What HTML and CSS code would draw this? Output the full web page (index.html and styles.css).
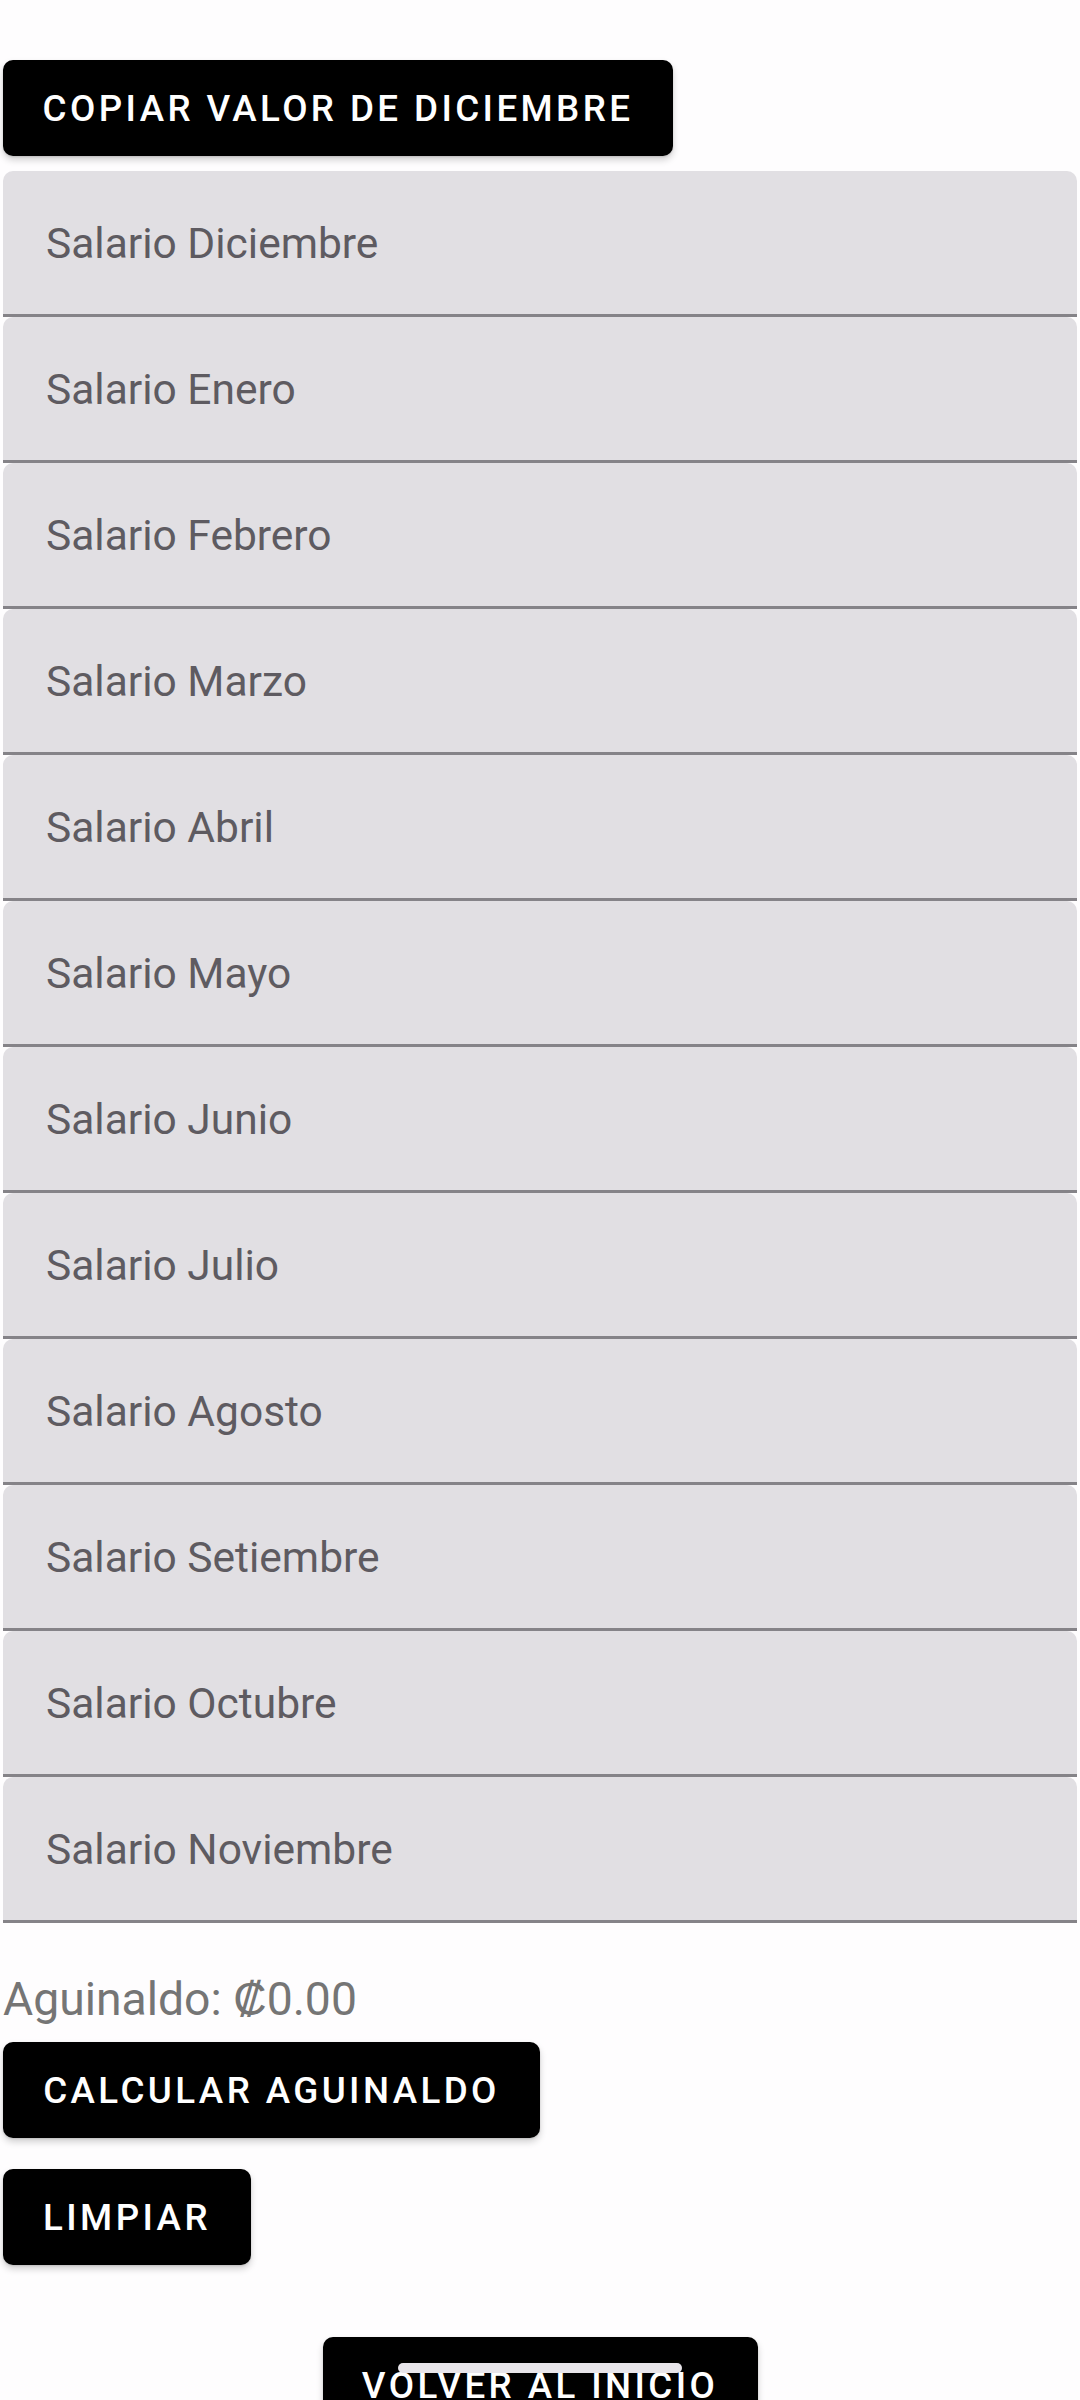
FILE: index.html
```html
<!DOCTYPE html>
<html lang="es">
<head>
    <meta charset="UTF-8">
    <meta name="viewport" content="width=device-width, initial-scale=1.0">
    <title>Aguinaldo</title>
    <link rel="stylesheet" href="styles.css">
</head>
<body>
  <div class="screen">
    <button class="btn btn-copy">COPIAR VALOR DE DICIEMBRE</button>

    <div class="fields">
        <div class="field">Salario Diciembre</div>
        <div class="field">Salario Enero</div>
        <div class="field">Salario Febrero</div>
        <div class="field">Salario Marzo</div>
        <div class="field">Salario Abril</div>
        <div class="field">Salario Mayo</div>
        <div class="field">Salario Junio</div>
        <div class="field">Salario Julio</div>
        <div class="field">Salario Agosto</div>
        <div class="field">Salario Setiembre</div>
        <div class="field">Salario Octubre</div>
        <div class="field">Salario Noviembre</div>
    </div>

    <p class="result">Aguinaldo: ₡0.00</p>

    <button class="btn btn-calc">CALCULAR AGUINALDO</button>
    <button class="btn btn-clear">LIMPIAR</button>

    <div class="bottom">
        <button class="btn btn-home">VOLVER AL INICIO</button>
    </div>
  </div>

  <!-- system gesture handle -->
  <div class="gesture-bar"></div>
</body>
</html>
```

FILE: styles.css
```css
:root {
    --background-color: #fefdfe;
    --field-bg: #e1dfe3;
    --field-line: #858388;
    --label-color: #5e5b61;
    --result-color: #757575;
}

html, body {
    margin: 0;
    height: 2400px;
    overflow: hidden;
}

body {
    background-color: var(--background-color);
    font-family: Roboto, "Liberation Sans", sans-serif;
    position: relative;
}

.screen {
    display: flex;
    flex-direction: column;
    align-items: flex-start;
    padding: 60px 3px 0 3px;
}

.btn {
    display: flex;
    align-items: center;
    justify-content: center;
    height: 96px;
    padding: 0;
    border: none;
    border-radius: 10px;
    background: #000;
    color: #fff;
    font-family: Roboto, "Liberation Sans", sans-serif;
    font-weight: 500;
    font-size: 36.75px;
    letter-spacing: 3.4px;
    box-shadow: 0 4px 7px rgba(0, 0, 0, 0.18), 0 1px 2px rgba(0, 0, 0, 0.12);
}

.btn-copy {
    width: 670px;
}

.fields {
    align-self: stretch;
    margin-top: 15px;
    display: flex;
    flex-direction: column;
}

.field {
    height: 143px;
    display: flex;
    align-items: center;
    padding-left: 43px;
    padding-top: 2px;
    box-sizing: border-box;
    height: 146px;
    background-color: var(--field-bg);
    border-bottom: 3px solid var(--field-line);
    border-radius: 10px 10px 0 0;
    color: var(--label-color);
    font-size: 42.5px;
}

.result {
    margin: 48px 0 0 0;
    line-height: 56px;
    font-size: 46.3px;
    color: var(--result-color);
}

.btn-calc {
    margin-top: 15px;
    width: 537px;
}

.btn-clear {
    margin-top: 31px;
    width: 248px;
}

.bottom {
    align-self: stretch;
    display: flex;
    justify-content: center;
    margin-top: 72px;
}

.btn-home {
    width: 435px;
}

.gesture-bar {
    position: absolute;
    top: 2363px;
    left: 398px;
    width: 284px;
    height: 10px;
    border-radius: 5px;
    background: #e8e5ea;
}
```
